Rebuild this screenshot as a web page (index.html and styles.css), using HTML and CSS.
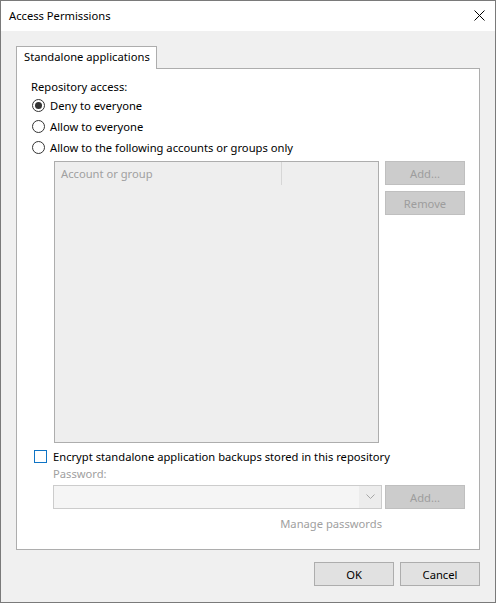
FILE: index.html
```html
<!DOCTYPE html>
<html>
<head>
<meta charset="utf-8">
<link rel="stylesheet" href="styles.css">
</head>
<body>
<div class="window">
  <div class="titlebar">
    <span class="title">Access Permissions</span>
    <svg class="close" width="11" height="11" viewBox="0 0 11 11"><path d="M0.5 0.5 L10.5 10.5 M10.5 0.5 L0.5 10.5" stroke="#000" stroke-width="1" fill="none"/></svg>
  </div>
  <div class="content">
    <div class="tabs">
      <div class="tab">Standalone applications</div>
    </div>
    <div class="panel">
      <div class="label">Repository access:</div>
      <div class="radio-row"><span class="radio checked"></span><span>Deny to everyone</span></div>
      <div class="radio-row"><span class="radio"></span><span>Allow to everyone</span></div>
      <div class="radio-row"><span class="radio"></span><span>Allow to the following accounts or groups only</span></div>
      <div class="list-area">
        <div class="list">
          <div class="list-header">
            <div class="col-head">Account or group</div>
          </div>
        </div>
        <div class="side-buttons">
          <div class="btn disabled">Add...</div>
          <div class="btn disabled">Remove</div>
        </div>
      </div>
      <div class="check-row"><span class="checkbox"></span><span>Encrypt standalone application backups stored in this repository</span></div>
      <div class="pw-label">Password:</div>
      <div class="pw-row">
        <div class="combo">
          <div class="combo-value"></div>
          <div class="combo-arrow"><svg width="9" height="6" viewBox="0 0 9 6"><path d="M0.5 0.5 L4.5 4.5 L8.5 0.5" stroke="#a6a6a6" stroke-width="1" fill="none"/></svg></div>
        </div>
        <div class="btn disabled">Add...</div>
      </div>
      <div class="manage-row"><span class="link disabled-text">Manage passwords</span></div>
    </div>
    <div class="footer">
      <div class="btn">OK</div>
      <div class="btn">Cancel</div>
    </div>
  </div>
</div>
</body>
</html>
```

FILE: styles.css
```css
* { box-sizing: border-box; }
html, body { margin: 0; padding: 0; }
body {
  width: 496px;
  height: 603px;
  font-family: "Noto Sans", "Open Sans", sans-serif;
  font-size: 11.2px;
  color: #000;
  background: #fff;
}
.window {
  width: 496px;
  height: 603px;
  border: 1px solid #7a7a7a;
  display: flex;
  flex-direction: column;
}
.titlebar {
  height: 30px;
  background: #fff;
  display: flex;
  align-items: center;
  justify-content: space-between;
  padding: 0 10px 1px 8px;
}
.close { display: block; margin-top: 0; }
.content {
  flex: 1;
  background: #f0f0f0;
  padding: 15px 15px 15px 15px;
  display: flex;
  flex-direction: column;
}
.tabs {
  display: flex;
  height: 22px;
  position: relative;
  z-index: 1;
}
.tab {
  width: 141px;
  height: 23px;
  background: #fff;
  border: 1px solid #adadad;
  border-bottom: none;
  padding-left: 7px;
  line-height: 20px;
}
.panel {
  height: 482px;
  background: #fff;
  border: 1px solid #adadad;
  padding: 10px 14px 0 14px;
  display: flex;
  flex-direction: column;
}
.label { height: 16px; line-height: 16px; }
.radio-row {
  height: 21px;
  display: flex;
  align-items: center;
  gap: 5px;
}
.radio {
  width: 13px;
  height: 13px;
  border: 1px solid #333;
  border-radius: 50%;
  margin-left: 1px;
  display: flex;
  align-items: center;
  justify-content: center;
}
.radio.checked::after {
  content: "";
  width: 7px;
  height: 7px;
  border-radius: 50%;
  background: #333;
}
.list-area {
  display: flex;
  margin-top: 3px;
  margin-left: 23px;
  gap: 6px;
}
.list {
  width: 325px;
  height: 282px;
  background: #eeeeee;
  border: 1px solid #adadad;
}
.list-header {
  height: 23px;
  display: flex;
}
.col-head {
  width: 227px;
  border-right: 1px solid #d6d6d6;
  color: #a0a0a0;
  padding-left: 6px;
  line-height: 23px;
}
.side-buttons {
  display: flex;
  flex-direction: column;
  gap: 6px;
}
.btn {
  width: 80px;
  height: 24px;
  background: #e1e1e1;
  border: 1px solid #adadad;
  display: flex;
  align-items: center;
  justify-content: center;
}
.btn.disabled {
  background: #cccccc;
  border-color: #bfbfbf;
  color: #9d9d9d;
}
.check-row {
  margin-top: 5px;
  height: 16px;
  display: flex;
  align-items: center;
  gap: 6px;
  margin-left: 3px;
}
.checkbox {
  width: 13px;
  height: 13px;
  border: 1px solid #0f74c5;
  background: #fff;
}
.pw-label {
  margin-top: 2px;
  margin-left: 22px;
  height: 16px;
  line-height: 16px;
  color: #a0a0a0;
}
.pw-row {
  margin-top: 3px;
  margin-left: 22px;
  display: flex;
  gap: 3px;
}
.combo {
  width: 329px;
  height: 24px;
  border: 1px solid #cccccc;
  background: #f5f5f5;
  display: flex;
}
.combo-value { flex: 1; }
.combo-arrow {
  width: 22px;
  background: #ececec;
  display: flex;
  align-items: center;
  justify-content: center;
}
.combo-arrow svg { display: block; }
.manage-row {
  margin-top: 7px;
  width: 351px;
  height: 16px;
  line-height: 16px;
  display: flex;
  justify-content: flex-end;
}
.disabled-text { color: #a0a0a0; }
.footer {
  margin-top: 12px;
  display: flex;
  justify-content: flex-end;
  gap: 6px;
}
.footer .btn { background: #e1e1e1; border-color: #adadad; }
```
